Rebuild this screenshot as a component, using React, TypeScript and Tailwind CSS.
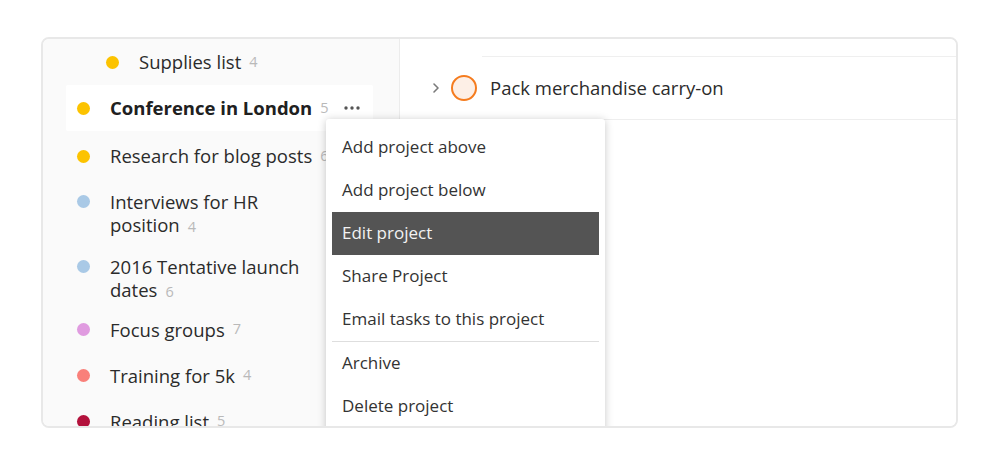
import type { ReactNode } from 'react';

type Project = {
  name: string;
  count: number;
  color: string;
  lines?: [string, string];
  indent?: boolean;
  active?: boolean;
  spacing?: string;
};

const projects: Project[] = [
  { name: 'Supplies list', count: 4, color: '#fcc300', indent: true },
  { name: 'Conference in London', count: 5, color: '#fcc300', active: true },
  { name: 'Research for blog posts', count: 6, color: '#fcc300', spacing: 'mt-[2px]' },
  { name: '', count: 4, color: '#a9c9e6', lines: ['Interviews for HR', 'position'], spacing: 'pt-[11px] pb-[7.5px]' },
  { name: '', count: 6, color: '#a9c9e6', lines: ['2016 Tentative launch', 'dates'], spacing: 'pt-[11.5px] pb-[5.5px]' },
  { name: 'Focus groups', count: 7, color: '#e09be0' },
  { name: 'Training for 5k', count: 4, color: '#f9807a' },
  { name: 'Reading list', count: 5, color: '#b3123c' },
];

const menuItems = [
  'Add project above',
  'Add project below',
  'Edit project',
  'Share Project',
  'Email tasks to this project',
];

function Dot({ color, className = '' }: { color: string; className?: string }) {
  return <span className={'block h-[13px] w-[13px] shrink-0 rounded-full ' + className} style={{ backgroundColor: color }} />;
}

function Count({ children }: { children: ReactNode }) {
  return <span className="ml-[8px] text-[14.5px] leading-none font-normal text-[#b9b9b9]">{children}</span>;
}

function ProjectRow({ p }: { p: Project }) {
  if (p.lines) {
    return (
      <div className={'flex items-start pl-[11px] leading-[23px] ' + (p.spacing ?? '')}>
        <Dot color={p.color} className="mt-[5px]" />
        <div className="ml-[20px]">
          <div>{p.lines[0]}</div>
          <div>
            {p.lines[1]}
            <Count>{p.count}</Count>
          </div>
        </div>
      </div>
    );
  }
  return (
    <div
      className={
        'flex h-[46px] items-center pr-[12px] ' +
        (p.indent ? 'pl-[40px] ' : 'pl-[11px] ') +
        (p.active ? 'rounded-[2px] bg-white font-bold text-[#202020] ' : '') +
        (p.spacing ?? '')
      }
    >
      <Dot color={p.color} />
      <span className="ml-[20px] whitespace-nowrap">{p.name}</span>
      <Count>{p.count}</Count>
      {p.active && (
        <svg className="ml-auto" width="18" height="6" viewBox="0 0 18 6">
          <circle cx="3" cy="3" r="1.7" fill="#555" />
          <circle cx="9" cy="3" r="1.7" fill="#555" />
          <circle cx="15" cy="3" r="1.7" fill="#555" />
        </svg>
      )}
    </div>
  );
}

export default function App() {
  return (
    <div className="h-[467px] w-[1000px] bg-white pt-[37px] pl-[41px] font-['Open_Sans',sans-serif] text-[18.5px] text-[#2b2b2b]">
      <div className="relative flex h-[391px] w-[917px] overflow-hidden rounded-[8px] border-2 border-[#e8e8e8]">
        {/* Sidebar */}
        <div className="w-[357px] shrink-0 border-r border-[#ececec] bg-[#fafafa] pl-[23px] pr-[26px]">
          {projects.map((p, i) => (
            <ProjectRow key={i} p={p} />
          ))}
        </div>

        {/* Task list */}
        <div className="flex-1 bg-white pt-[17px]">
          <div className="ml-[82px] border-t border-[#efefef]" />
          <div className="flex h-[63px] items-center border-b border-[#eeeeee] pl-[32px]">
            <svg width="8" height="12" viewBox="0 0 8 12">
              <polyline points="2,2 6,6 2,10" fill="none" stroke="#7a7a7a" strokeWidth="1.6" strokeLinecap="round" strokeLinejoin="round" />
            </svg>
            <span className="ml-[11px] h-[26px] w-[26px] rounded-full border-2 border-[#f57c1f] bg-[#fdefe6]" />
            <span className="ml-[13px]">Pack merchandise carry-on</span>
          </div>
        </div>

        {/* Context menu */}
        <div className="absolute top-[80px] left-[283px] w-[279px] rounded-t-[3px] bg-white px-[6px] pt-[6.5px] pb-[10px] text-[17px] text-[#333] shadow-[0_1px_8px_rgba(0,0,0,0.22)]">
          {menuItems.map((item) => (
            <div
              key={item}
              className={
                'flex h-[43px] items-center pl-[10px] ' +
                (item === 'Edit project' ? 'bg-[#545454] text-[#f2f2f2]' : '')
              }
            >
              {item}
            </div>
          ))}
          <div className="border-t border-[#dedede]" />
          <div className="flex h-[43px] items-center pl-[10px]">Archive</div>
          <div className="flex h-[43px] items-center pl-[10px]">Delete project</div>
        </div>
      </div>
    </div>
  );
}
